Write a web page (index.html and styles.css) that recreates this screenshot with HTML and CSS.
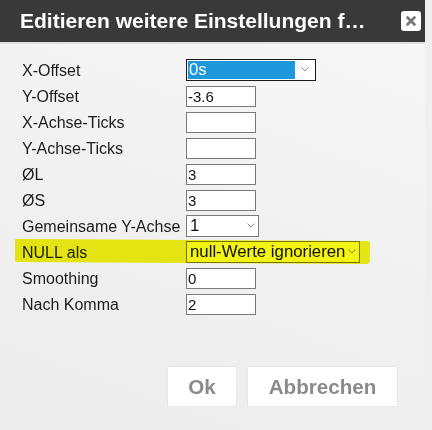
FILE: index.html
```html
<!DOCTYPE html>
<html lang="de">

<head>
    <meta charset="UTF-8">
    <meta name="viewport" content="width=device-width, initial-scale=1.0">
    <title>Editieren weitere Einstellungen</title>
    <link rel="stylesheet" href="styles.css">
</head>

<body>
    <div class="dialog">
        <div class="titlebar">
            <div class="titulo">Editieren weitere Einstellungen f…</div>
            <div class="cerrar">
                <svg width="20" height="20" viewBox="0 0 20 20">
                    <path d="M6.5 6.5 L13.5 13.5 M13.5 6.5 L6.5 13.5" stroke="#777" stroke-width="2.6" stroke-linecap="round" />
                </svg>
            </div>
        </div>

        <div class="formulario">
            <div class="fila">
                <div class="etiqueta">X-Offset</div>
                <div class="select select-activo ancho-xoffset">
                    <span class="select-valor">0s</span>
                    <svg class="chevron" width="8" height="5" viewBox="0 0 8 5">
                        <path d="M0.5 0.5 L4 4 L7.5 0.5" fill="none" stroke="#888" stroke-width="1" />
                    </svg>
                </div>
            </div>
            <div class="fila">
                <div class="etiqueta">Y-Offset</div>
                <div class="campo">-3.6</div>
            </div>
            <div class="fila">
                <div class="etiqueta">X-Achse-Ticks</div>
                <div class="campo"></div>
            </div>
            <div class="fila">
                <div class="etiqueta">Y-Achse-Ticks</div>
                <div class="campo"></div>
            </div>
            <div class="fila">
                <div class="etiqueta">ØL</div>
                <div class="campo">3</div>
            </div>
            <div class="fila">
                <div class="etiqueta">ØS</div>
                <div class="campo">3</div>
            </div>
            <div class="fila">
                <div class="etiqueta">Gemeinsame Y-Achse</div>
                <div class="select ancho-achse">
                    <span class="select-valor">1</span>
                    <svg class="chevron" width="8" height="5" viewBox="0 0 8 5">
                        <path d="M0.5 0.5 L4 4 L7.5 0.5" fill="none" stroke="#888" stroke-width="1" />
                    </svg>
                </div>
            </div>
            <div class="fila fila-marcada">
                <div class="etiqueta">NULL als</div>
                <div class="select ancho-null">
                    <span class="select-valor">null-Werte ignorieren</span>
                    <svg class="chevron" width="8" height="5" viewBox="0 0 8 5">
                        <path d="M0.5 0.5 L4 4 L7.5 0.5" fill="none" stroke="#888" stroke-width="1" />
                    </svg>
                </div>
                <span class="marcador"></span>
            </div>
            <div class="fila">
                <div class="etiqueta">Smoothing</div>
                <div class="campo">0</div>
            </div>
            <div class="fila">
                <div class="etiqueta">Nach Komma</div>
                <div class="campo">2</div>
            </div>
        </div>

        <div class="botones">
            <div class="boton boton-ok">Ok</div>
            <div class="boton boton-cancelar">Abbrechen</div>
        </div>
    </div>
</body>

</html>
```

FILE: styles.css
```css
body {
    margin: 0;
    padding: 0;
    font-family: "Liberation Sans", Arial, sans-serif;
    background-color: #efefef;
}

.dialog {
    width: 425px;
    height: 430px;
    background: linear-gradient(200deg, #f8f8f8 0%, #f1f1f1 50%, #ececec 100%);
    box-sizing: border-box;
}

.titlebar {
    height: 42px;
    background-color: #393939;
    border-bottom: 2px solid #dedede;
    display: flex;
    align-items: center;
    padding: 0 4px 0 20px;
    box-sizing: content-box;
}

.titulo {
    flex: 1;
    color: #fff;
    font-size: 21px;
    font-weight: bold;
    white-space: nowrap;
    padding-bottom: 1px;
}

.cerrar {
    width: 20px;
    height: 20px;
    background-color: #fff;
    border-radius: 3px;
    display: flex;
    margin-top: -1px;
}

.formulario {
    padding: 13px 0 0 22px;
}

.fila {
    position: relative;
    display: flex;
    align-items: center;
    height: 26px;
}

.etiqueta {
    width: 164px;
    font-size: 16px;
    color: #1c1c1c;
    white-space: nowrap;
    padding-top: 1px;
}

.campo {
    width: 70px;
    height: 21px;
    border: 1px solid #7a7a7a;
    background-color: #fff;
    box-sizing: border-box;
    font-size: 15px;
    line-height: 19px;
    padding-left: 1px;
    color: #111;
}

.select {
    height: 22px;
    border: 1px solid #7a7a7a;
    background-color: #fff;
    box-sizing: border-box;
    display: flex;
    align-items: center;
    font-size: 16.8px;
    color: #111;
    padding: 0 0 0 3px;
}

.select-valor {
    flex: 1;
    white-space: nowrap;
    line-height: 18px;
    overflow: hidden;
}

.chevron {
    flex-shrink: 0;
    margin: 0 3px 1px 3px;
}

.select-activo {
    border-color: #1a1a1a;
    padding-left: 1px;
}

.select-activo .select-valor {
    background-color: #1e97dc;
    color: #fff;
    padding-left: 1px;
    height: 18px;
}

.select-activo .chevron {
    margin: 0 6px 1px 6px;
}

.ancho-xoffset {
    width: 130px;
}

.ancho-achse {
    width: 73px;
}

.ancho-null {
    width: 174px;
}

.marcador {
    position: absolute;
    left: -7px;
    top: 1px;
    width: 355px;
    height: 23px;
    background-color: #f3f314;
    mix-blend-mode: multiply;
    transform: rotate(0.3deg);
    border-radius: 1px 3px 4px 2px;
}

.botones {
    display: flex;
    justify-content: flex-end;
    gap: 10px;
    padding: 49px 27px 0 0;
}

.boton {
    height: 41px;
    background-color: #fff;
    border: 1px solid #e6e6e6;
    border-radius: 2px;
    box-sizing: border-box;
    display: flex;
    align-items: center;
    justify-content: center;
    font-size: 20.6px;
    font-weight: bold;
    color: #8b8b8b;
}

.boton-ok {
    width: 70px;
}

.boton-cancelar {
    width: 151px;
}
```
